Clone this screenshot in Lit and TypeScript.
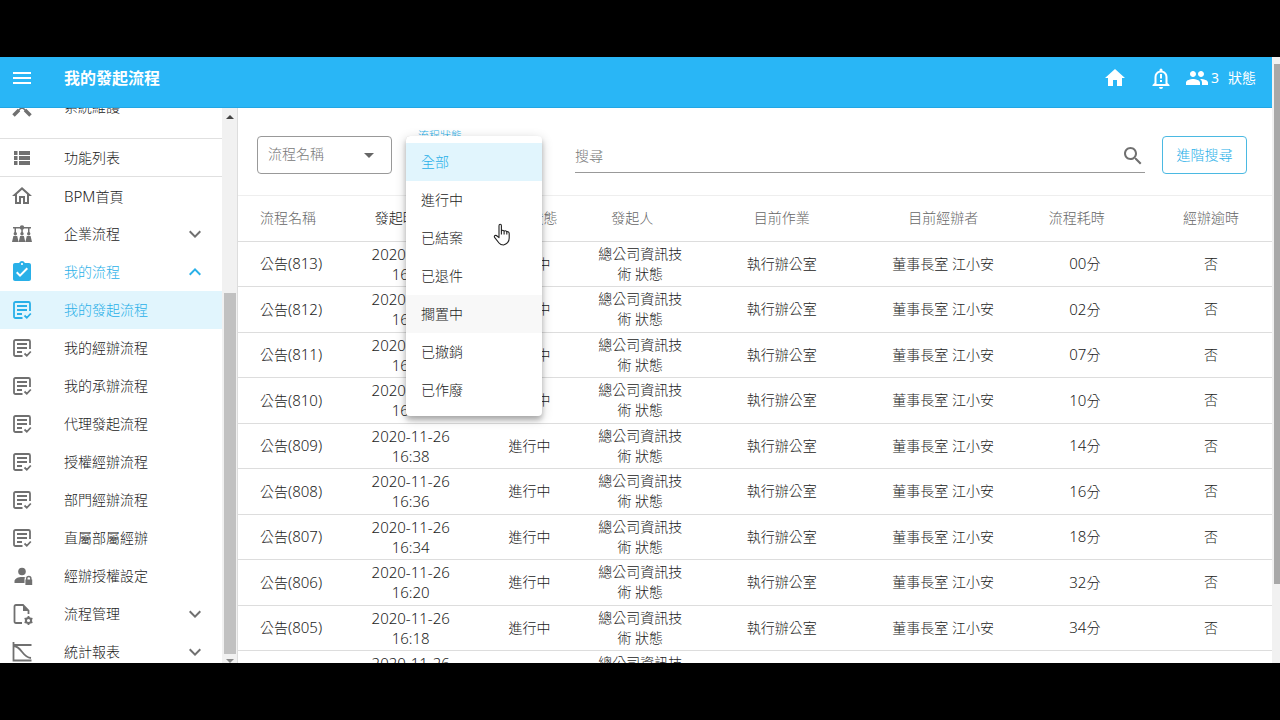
import { LitElement, html, css, svg } from "lit";
import { customElement, state, query } from "lit/decorators.js";
import { classMap } from "lit/directives/class-map.js";

const glyphs: Record<string, unknown> = {
  menu: svg`<path d="M3 18h18v-2H3v2zm0-5h18v-2H3v2zm0-7v2h18V6H3z"/>`,
  home: svg`<path d="M10 20v-6h4v6h5v-8h3L12 3 2 12h3v8z"/>`,
  bell: svg`<path fill-rule="evenodd" d="M12 23a2 2 0 0 0 2-2h-4a2 2 0 0 0 2 2zm6.500-6v-6c0-3.100-2-5.600-5-6.300V4a1.500 1.500 0 0 0-3 0v.7c-3 .7-5 3.200-5 6.300v6l-2 2v1h17v-1zm-2 1h-9v-7c0-2.500 1.800-4.500 4.500-4.500s4.500 2 4.500 4.500z"/><path d="M11 8h2v4.500h-2zM11 14h2v2h-2z"/>`,
  people: svg`<path d="M16 11c1.660 0 2.990-1.340 2.990-3S17.660 5 16 5s-3 1.340-3 3 1.340 3 3 3zm-8 0c1.660 0 2.990-1.340 2.990-3S9.660 5 8 5 5 6.340 5 8s1.340 3 3 3zm0 2c-2.330 0-7 1.170-7 3.500V19h14v-2.500c0-2.330-4.670-3.500-7-3.500zm8 0c-.29 0-.62.02-.97.05 1.160.84 1.970 1.970 1.970 3.450V19h6v-2.500c0-2.330-4.670-3.500-7-3.500z"/>`,
  tools: svg`<path d="M5 5l14 14M19 5L5 19" fill="none" stroke="currentColor" stroke-width="1.500"/><path d="M3.500 20.500l5.500-5.500M20.500 20.500L15 15" fill="none" stroke="currentColor" stroke-width="3.500"/>`,
  list: svg`<path d="M4 5h3.500v4H4zM9 5h11v4H9zM4 10h3.500v4H4zM9 10h11v4H9zM4 15h3.500v4H4zM9 15h11v4H9z"/>`,
  house: svg`<path d="M12 5.690l5 4.500V18h-2v-6H9v6H7v-7.810l5-4.500M12 3L2 12h3v8h6v-6h2v6h6v-8h3"/>`,
  org: svg`<circle cx="12" cy="5.500" r="2.200"/><path d="M3 5h18v1.600H3zM4.500 6h1.500v5H4.500zM11.300 6h1.500v5h-1.500zM18 6h1.500v5H18z"/><circle cx="5.300" cy="11.800" r="1.700"/><circle cx="12" cy="11.800" r="1.700"/><circle cx="18.700" cy="11.800" r="1.700"/><path d="M2 20l1.400-6h3.800l1.400 6zM8.700 20l1.400-6h3.800l1.400 6zM15.400 20l1.400-6h3.800l1.400 6z"/>`,
  clip: svg`<path d="M19 3h-4.180C14.400 1.840 13.300 1 12 1c-1.300 0-2.400.84-2.820 2H5c-1.100 0-2 .9-2 2v14c0 1.100.9 2 2 2h14c1.100 0 2-.9 2-2V5c0-1.100-.9-2-2-2zm-7 0c.55 0 1 .45 1 1s-.45 1-1 1-1-.45-1-1 .45-1 1-1zm-2 14l-4-4 1.410-1.410L10 14.170l6.590-6.590L18 9l-8 8z"/>`,
  doc: svg`<path fill="none" stroke="currentColor" stroke-width="1.800" d="M12.500 20H5.500Q4 20 4 18.500v-13Q4 4 5.500 4h13Q20 4 20 5.500V13M7 8h10M7 12h10M7 16h5M14.500 17.500l2.300 2.300 4-4.300"/>`,
  lock: svg`<circle cx="12" cy="7.500" r="3.800"/><path d="M12 13c-3.500 0-7.500 1.500-7.500 4.200V19h10v-4.500l1-1C14.300 13.100 13 13 12 13z"/><path fill-rule="evenodd" d="M16 15.500v-1a2.800 2.800 0 0 1 5.600 0v1h.6V21h-6.800v-5.500zm1.500 0h2.600v-1a1.300 1.300 0 0 0-2.600 0z"/>`,
  cog: svg`<path fill="none" stroke="currentColor" stroke-width="1.800" d="M12 21H6q-1.500 0-1.500-1.500v-15Q4.500 3 6 3h7l5.500 5.500V12"/><path d="M13 3l6 6h-6z"/><circle cx="18.500" cy="18.500" r="2.600" fill="none" stroke="currentColor" stroke-width="2"/><path fill="none" stroke="currentColor" stroke-width="1.800" d="M18.500 14v2M18.500 21v2M14.600 16.300l1.700 1M20.700 19.700l1.700 1M14.600 20.700l1.700-1M20.700 17.300l1.700-1"/>`,
  chart: svg`<path fill="none" stroke="currentColor" stroke-width="1.800" d="M3.500 2v18.500H21.500M3.500 5H21.500M4 6c8 1 8 11 17 12"/>`,
  down: svg`<path d="M7.410 8.590L12 13.170l4.590-4.580L18 10l-6 6-6-6z"/>`,
  up: svg`<path d="M7.410 15.410L12 10.830l4.590 4.580L18 14l-6-6-6 6z"/>`,
  search: svg`<path d="M15.500 14h-.79l-.28-.27C15.410 12.590 16 11.110 16 9.500 16 5.910 13.090 3 9.500 3S3 5.910 3 9.500 5.910 16 9.500 16c1.610 0 3.090-.59 4.230-1.570l.27.28v.79l5 4.990L20.490 19l-4.990-5zm-6 0C7.010 14 5 11.990 5 9.500S7.010 5 9.500 5 14 7.010 14 9.500 11.990 14 9.500 14z"/>`,
  hand: svg`<path fill="#fff" stroke="#222" stroke-width="1.100" stroke-linejoin="round" d="M9 14V3.700Q9 2.300 10.200 2.300t1.200 1.400V9q.2-.8 1.300-.8t1.400 1.200q.2-.7 1.300-.6t1.400 1.200q.3-.6 1.300-.3T19.200 11.500V16q0 3-1.600 4.700T13.500 23q-3 0-4.500-2L4.600 15.400q-.7-1.200.4-1.800t2.100.4L9 15.600zM11.400 9v3.500M14.100 9.500v3M16.800 10v2.500"/>`,
};

const icon = (name: string) =>
  html`<svg class="icon" viewBox="0 0 24 24" aria-hidden="true">${glyphs[name]}</svg>`;

interface NavItem {
  icon: string;
  label: string;
  latin?: string;
  arrow?: "up" | "down";
}

const NAV: NavItem[] = [
  { icon: "tools", label: "系統維護" },
  { icon: "list", label: "功能列表" },
  { icon: "house", latin: "BPM", label: "首頁" },
  { icon: "org", label: "企業流程", arrow: "down" },
  { icon: "clip", label: "我的流程", arrow: "up" },
  { icon: "doc", label: "我的發起流程" },
  { icon: "doc", label: "我的經辦流程" },
  { icon: "doc", label: "我的承辦流程" },
  { icon: "doc", label: "代理發起流程" },
  { icon: "doc", label: "授權經辦流程" },
  { icon: "doc", label: "部門經辦流程" },
  { icon: "doc", label: "直屬部屬經辦" },
  { icon: "lock", label: "經辦授權設定" },
  { icon: "cog", label: "流程管理", arrow: "down" },
  { icon: "chart", label: "統計報表", arrow: "down" },
];

const STATUSES = ["全部", "進行中", "已結案", "已退件", "擱置中", "已撤銷", "已作廢"];

const ROWS: [number, string, string][] = [
  [813, "16:52", "00"],
  [812, "16:50", "02"],
  [811, "16:45", "07"],
  [810, "16:42", "10"],
  [809, "16:38", "14"],
  [808, "16:36", "16"],
  [807, "16:34", "18"],
  [806, "16:20", "32"],
  [805, "16:18", "34"],
  [804, "16:16", "36"],
];

const base = css`
  * { box-sizing: border-box; }
  .icon { width: 24px; height: 24px; fill: currentColor; flex: none; display: block; }
  button, input, select { font: inherit; color: inherit; }
  button { border: 0; background: none; padding: 0; cursor: pointer; }
  .latin { font-size: 15px; }
`;

@customElement("side-nav")
export class SideNav extends LitElement {
  @state() private current = "我的發起流程";
  @query(".list") private list!: HTMLElement;

  static styles = [
    base,
    css`
      :host { display: flex; min-height: 0; border-right: 1px solid #ddd; }
      .list { flex: 1; overflow: hidden; }
      .item {
        display: flex; align-items: center; height: 38px;
        padding: 0 15px 0 10px; color: #222; text-decoration: none;
      }
      .item .icon { color: #707070; }
      .item:first-child { height: 62px; }
      .item:first-child, .item:nth-child(2) { box-shadow: 0 1px #e0e0e0; }
      .item:nth-child(2) { height: 37px; margin: 1px 0; }
      .label { flex: 1; padding-left: 30px; }
      .item.open, .item.open .icon, .item.current, .item.current .icon { color: #29b0e8; }
      .current { background: #e1f5fd; }
      .bar {
        width: 15px; background: #f1f1f1; display: flex; flex-direction: column;
        align-items: center; padding: 7px 0 0;
      }
      .arrow { border: 4px solid transparent; border-top: 0; border-bottom: 4px solid #444; }
      .arrow.end { border-top: 4px solid #888; border-bottom: 0; margin: 5px 0 0; }
      .space { flex: 174; }
      .thumb { flex: 360; width: 12px; background: #c1c1c1; }
    `,
  ];

  firstUpdated() {
    this.list.scrollTop = 32;
  }

  render() {
    return html`
      <nav class="list">
        ${NAV.map(
          (n) => html`<a
            class=${classMap({ item: true, open: n.arrow === "up", current: n.label === this.current })}
            href="#"
            @click=${(e: Event) => {
              e.preventDefault();
              this.current = n.label;
            }}
            >${icon(n.icon)}<span class="label"
              >${n.latin ? html`<span class="latin">${n.latin}</span>` : ""}${n.label}</span
            >${n.arrow ? icon(n.arrow) : ""}</a
          >`
        )}
      </nav>
      <div class="bar">
        <span class="arrow"></span><span class="space"></span><span class="thumb"></span
        ><span class="arrow end"></span>
      </div>
    `;
  }
}

@customElement("filter-bar")
export class FilterBar extends LitElement {
  @state() private status = "全部";
  @state() private focused = "擱置中";

  static styles = [
    base,
    css`
      :host { display: flex; align-items: flex-start; padding: 28px 25px 21px 19px; }
      .field { position: relative; width: 135px; height: 38px; flex: none; }
      .field + .field { margin-left: 14px; }
      .field select {
        appearance: none; width: 100%; height: 100%; padding: 0 10px 2px; background: #fff;
        border: 1px solid #999; border-radius: 4px; color: #777;
      }
      .caret {
        position: absolute; right: 18px; top: 17px; pointer-events: none;
        border: 5px solid transparent; border-top-color: #666; border-bottom: 0;
      }
      .float {
        position: absolute; left: 8px; top: -8px; padding: 0 4px; background: #fff;
        color: #29b0e8; font-size: 11px; line-height: 16px;
      }
      .menu {
        position: absolute; z-index: 2; left: 0; top: 0; width: 136px; padding: 7px 0;
        background: #fff; border-radius: 4px;
        box-shadow: 0 4px 5px rgba(0, 0, 0, 0.22), 0 3px 12px rgba(0, 0, 0, 0.2);
      }
      .option { display: block; width: 100%; height: 38px; padding: 0 15px; text-align: left; color: #222; }
      .option.focused { background: #f8f8f8; }
      .option.chosen { background: #e1f5fd; color: #29b0e8; }
      .pointer { position: absolute; z-index: 3; left: 84px; top: 86px; pointer-events: none; }
      .search {
        flex: 1; display: flex; align-items: center; height: 37px; margin: 0 17px 0 34px;
        border-bottom: 1px solid #999; color: #707070;
      }
      .search input { flex: 1; min-width: 0; border: 0; outline: 0; padding: 4px 0 0; background: none; }
      .search input::placeholder { color: #777; opacity: 1; }
      .search .icon { display: block; margin: 3px 0 0; }
      .more {
        width: 85px; height: 38px; flex: none; border: 1px solid #4bb9e2; border-radius: 4px; color: #29b0e8;
      }
    `,
  ];

  render() {
    return html`
      <div class="field">
        <select aria-label="流程名稱"><option>流程名稱</option></select>
        <span class="caret"></span>
      </div>
      <div class="field">
        <select id="status" aria-labelledby="status-label"><option>${this.status}</option></select>
        <label class="float" id="status-label" for="status">流程狀態</label>
        <div class="menu" role="listbox">
          ${STATUSES.map(
            (s) => html`<button
              class=${classMap({ option: true, chosen: s === this.status, focused: s === this.focused })}
              role="option"
              aria-selected=${s === this.status}
              @click=${() => (this.status = s)}
            >${s}</button>`
          )}
        </div>
        <span class="pointer">${icon("hand")}</span>
      </div>
      <div class="search">
        <input type="text" aria-label="搜尋" placeholder="搜尋" />
        <button aria-label="送出搜尋">${icon("search")}</button>
      </div>
      <button class="more">進階搜尋</button>
    `;
  }
}

@customElement("process-table")
export class ProcessTable extends LitElement {
  static styles = [
    base,
    css`
      :host { display: block; }
      table { width: 100%; table-layout: fixed; border-collapse: separate; border-spacing: 0; text-align: center; }
      th, td { padding: 0 12px 1px; line-height: 20px; border-bottom: 1px solid #ddd; color: #222; }
      th { height: 47px; font-weight: inherit; color: #666; border-top: 1px solid #eee; }
      td { height: 45px; }
      tr:nth-child(even) td { height: 46px; }
      th:first-child, td:first-child { text-align: left; padding: 0 0 1px 22px; }
      .sortable { padding-right: 28px; }
      .sorted { color: #222; }
      .c1, .c3 { width: 10.4%; }
      .c2, .c7 { width: 12.6%; }
      .c4 { width: 11%; }
      .c5 { width: 16.4%; }
      .c6 { width: 14.8%; }
    `,
  ];

  render() {
    return html`
      <table>
        <thead>
          <tr>
            <th class="c1">流程名稱</th>
            <th class="c2 sortable sorted">發起時間</th>
            <th class="c3">流程狀態</th>
            <th class="c4 sortable">發起人</th>
            <th class="c5">目前作業</th>
            <th class="c6">目前經辦者</th>
            <th class="c7 sortable">流程耗時</th>
            <th>經辦逾時</th>
          </tr>
        </thead>
        <tbody>
          ${ROWS.map(
            ([id, time, mins]) => html`<tr>
              <td>公告<span class="latin">(${id})</span></td>
              <td class="latin">2020-11-26 ${time}</td>
              <td>進行中</td>
              <td>總公司資訊技術 狀態</td>
              <td>執行辦公室</td>
              <td>董事長室 江小安</td>
              <td><span class="latin">${mins}</span>分</td>
              <td>否</td>
            </tr>`
          )}
        </tbody>
      </table>
    `;
  }
}

@customElement("app-root")
export class AppRoot extends LitElement {
  static styles = [
    base,
    css`
      :host {
        display: flex; flex-direction: column; height: 100vh; box-sizing: border-box;
        padding: 57px 0; background: #000; overflow: hidden;
        font: 300 14px/20px "Noto Sans", "Noto Sans CJK TC", sans-serif;
      }
      .screen { flex: 1; min-height: 0; display: flex; background: #fff; }
      .app { flex: 1; min-width: 0; display: flex; flex-direction: column; }
      .top {
        height: 51px; flex: none; display: flex; align-items: center; padding: 0 16px 9px 10px;
        background: #29b6f6; color: #fff; box-shadow: inset 0 -1px #22a6e4; font-weight: 400;
      }
      .title { flex: 1; margin: 0 0 0 30px; font-size: 16px; font-weight: 700; }
      .top .home { margin-right: 22px; }
      .top .bell { margin-right: 12px; }
      .user { display: flex; align-items: center; gap: 2px; }
      .name { margin-left: 7px; }
      .body { flex: 1; min-height: 0; display: flex; }
      side-nav { width: 238px; flex: none; }
      main { flex: 1; min-width: 0; overflow: hidden; }
      .scroll {
        width: 8px; display: flex; flex-direction: column; align-items: flex-end;
        background: #f1f1f1; padding-top: 7px;
      }
      .thumb { width: 6px; flex: 520; background: #a8a8a8; }
      .rest { flex: 79; }
    `,
  ];

  render() {
    return html`
      <div class="screen">
        <div class="app">
          <header class="top">
            <button aria-label="選單">${icon("menu")}</button>
            <h1 class="title">我的發起流程</h1>
            <button class="home" aria-label="首頁">${icon("home")}</button>
            <button class="bell" aria-label="通知">${icon("bell")}</button>
            <button class="user">${icon("people")}<span>3</span><span class="name">狀態</span></button>
          </header>
          <div class="body">
            <side-nav></side-nav>
            <main>
              <filter-bar></filter-bar>
              <process-table></process-table>
            </main>
          </div>
        </div>
        <div class="scroll"><span class="thumb"></span><span class="rest"></span></div>
      </div>
    `;
  }
}
